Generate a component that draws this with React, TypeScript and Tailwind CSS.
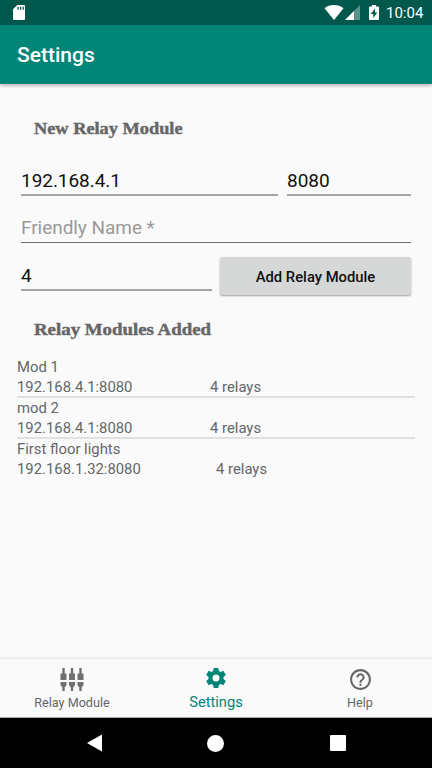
import React from "react";

type FieldProps = { value: string; className: string; muted?: boolean };

function Field({ value, className, muted }: FieldProps) {
  return (
    <div className={`flex items-start whitespace-nowrap text-[19px] leading-[28px] tracking-[-0.05px] ${muted ? "text-[#999999]" : "text-[#111111]"} ${className}`}>
      {value}
    </div>
  );
}

function Heading({ children, className }: { children: string; className: string }) {
  return (
    <h2 className={`ml-[34px] w-max origin-left whitespace-nowrap font-['Liberation_Serif',serif] text-[16px] font-bold leading-[20px] text-[#666666] [-webkit-text-stroke:0.4px_#666666] ${className}`}>
      {children}
    </h2>
  );
}

const modules = [
  { name: "Mod 1", address: "192.168.4.1:8080", gap: "w-[193px]", box: "h-[41px] border-b-2 border-[#e0e0e0]" },
  { name: "mod 2", address: "192.168.4.1:8080", gap: "w-[193px]", box: "h-[41px] border-b-2 border-[#e0e0e0]" },
  { name: "First floor lights", address: "192.168.1.32:8080", gap: "w-[199px]", box: "h-[41px]" },
];

export default function App() {
  return (
    <div className="flex h-[768px] w-[432px] flex-col overflow-hidden bg-[#fafafa] font-['Roboto',sans-serif]">
      <div className="flex h-[25px] shrink-0 items-center bg-[#00574b] pl-[13px] text-white">
        <svg width="12" height="15" viewBox="0 0 12 15">
          <path fill="#fff" d="M4.3 0H11a1 1 0 0 1 1 1v13a1 1 0 0 1-1 1H1a1 1 0 0 1-1-1V4.3Z" />
          <path stroke="#00574b" strokeWidth="1.3" d="M5 1.8v3M7.6 1.8v3M10.2 1.8v3" />
        </svg>
        <svg className="ml-[299px]" width="20" height="15" viewBox="0 0 20 15">
          <path fill="#fff" d="M.5 3.3C5.8-1 14.2-1 19.5 3.3L10 15Z" />
        </svg>
        <svg className="ml-[1px]" width="15" height="15" viewBox="0 0 15 15">
          <path fill="#5a9188" d="M15 0v15H0Z" />
          <path fill="#fff" d="M9 6v9H0Z" />
        </svg>
        <svg className="ml-[9px]" width="10" height="15" viewBox="0 0 10 15">
          <path fill="#fff" d="M3 0h4v1.5h2a1 1 0 0 1 1 1V14a1 1 0 0 1-1 1H1a1 1 0 0 1-1-1V2.500a1 1 0 0 1 1-1h2Z" />
          <path fill="#00574b" d="M6 3.500 1.800 9h2.500v4L8.300 7.500H6Z" />
        </svg>
        <span className="ml-[7px] mt-[1px] text-[15px] leading-[20px]">10:04</span>
      </div>
      <header className="z-10 flex h-[59px] shrink-0 items-center bg-[#008577] pl-[17px] pt-[2px] text-[21px] font-medium text-white shadow-[0_2px_3px_rgba(0,0,0,0.25)]">
        Settings
      </header>
      <main className="flex min-h-0 flex-1 flex-col pt-[35px]">
        <Heading className="scale-x-[1.145]">New Relay Module</Heading>
        <div className="ml-[21px] mt-[28px] flex h-[29px] w-[390px] justify-between">
          <Field value="192.168.4.1" className="w-[257px] border-b-2 border-[#a4a4a4]" />
          <Field value="8080" className="w-[124px] border-b-2 border-[#a4a4a4]" />
        </div>
        <Field value="Friendly Name *" muted className="ml-[21px] mt-[18px] h-[29px] w-[390px] border-b border-[#707070]" />
        <div className="ml-[21px] mt-[14px] flex w-[390px] justify-between">
          <Field value="4" className="mt-[5px] h-[29px] w-[191px] border-b-2 border-[#a4a4a4]" />
          <button className="h-[38px] w-[191px] rounded-[2px] bg-[#d6d7d7] pt-[2px] text-[14.800px] font-medium text-[#111111] shadow-[0_1px_2px_rgba(0,0,0,0.35)]">
            Add Relay Module
          </button>
        </div>
        <Heading className="mt-[25px] scale-x-[1.178]">Relay Modules Added</Heading>
        <ul className="ml-[17px] mt-[17px] w-[398px] text-[14.850px] leading-[20px] text-[#666666]">
          {modules.map((m) => (
            <li key={m.name} className={m.box}>
              <div>{m.name}</div>
              <div className="flex">
                <span className={m.gap}>{m.address}</span>
                <span>4 relays</span>
              </div>
            </li>
          ))}
        </ul>
      </main>
      <nav className="grid h-[59px] shrink-0 grid-cols-3 border-b border-[#aaaaaa] text-[12.600px] text-[#666666] shadow-[0_-1px_2px_rgba(0,0,0,0.1)]">
        <div className="flex flex-col items-center pt-[9px]">
          <svg width="24" height="24" viewBox="0 0 24 24" fill="#707070">
            {[0, 8.500, 17].map((x) => (
              <g key={x} transform={`translate(${x} 0)`}>
                <path d="M2.300 0h2.400v5.500h1.800V12H.5V5.500h1.800Z" />
                <path d="M.5 14h6v3.200L4.700 19.200V23H2.300v-3.800L.5 17.200Z" />
              </g>
            ))}
          </svg>
          <span className="mt-[2px] leading-[18px]">Relay Module</span>
        </div>
        <div className="flex flex-col items-center pt-[7px] text-[#008577]">
          <svg width="24" height="24" viewBox="0 0 24 24" fill="currentColor">
            <path d="M19.430 12.980c.04-.32.07-.64.07-.98s-.03-.66-.07-.98l2.110-1.650c.19-.15.24-.42.12-.64l-2-3.460c-.12-.22-.39-.3-.61-.22l-2.490 1c-.52-.4-1.080-.73-1.690-.98l-.38-2.650A.488.488 0 0 0 14 2h-4c-.25 0-.46.18-.49.42l-.38 2.650c-.61.25-1.170.59-1.690.98l-2.490-1c-.23-.09-.49 0-.61.22l-2 3.460c-.13.22-.07.49.12.64l2.110 1.650c-.04.32-.07.65-.07.98s.03.66.07.98l-2.110 1.650c-.19.15-.24.42-.12.64l2 3.460c.12.22.39.3.61.22l2.490-1c.52.4 1.080.73 1.690.98l.38 2.650c.03.24.24.42.49.42h4c.25 0 .46-.18.49-.42l.38-2.650c.61-.25 1.170-.59 1.690-.98l2.490 1c.23.09.49 0 .61-.22l2-3.460c.12-.22.07-.49-.12-.64zM12 15.500A3.500 3.500 0 1 1 12 8.500a3.500 3.500 0 0 1 0 7z" />
          </svg>
          <span className="mt-[2px] text-[14.700px] leading-[20px]">Settings</span>
        </div>
        <div className="flex flex-col items-center pt-[8px]">
          <svg width="25" height="25" viewBox="0 0 24 24" fill="currentColor">
            <path d="M11 18h2v-2h-2zm1-16C6.480 2 2 6.480 2 12s4.480 10 10 10 10-4.480 10-10S17.520 2 12 2zm0 18c-4.410 0-8-3.590-8-8s3.590-8 8-8 8 3.590 8 8-3.590 8-8 8zm0-14c-2.210 0-4 1.790-4 4h2c0-1.100.9-2 2-2s2 .9 2 2c0 2-3 1.750-3 5h2c0-2.250 3-2.500 3-5 0-2.210-1.790-4-4-4z" />
          </svg>
          <span className="mt-[2px] leading-[18px]">Help</span>
        </div>
      </nav>
      <div className="flex h-[50px] shrink-0 items-center bg-black pl-[87px]">
        <svg width="15" height="18" viewBox="0 0 15 18"><path fill="#fff" d="M15 .5v17L0 9Z" /></svg>
        <div className="ml-[105px] size-[17px] rounded-full bg-white" />
        <div className="ml-[106px] size-[16px] rounded-[1px] bg-white" />
      </div>
    </div>
  );
}
